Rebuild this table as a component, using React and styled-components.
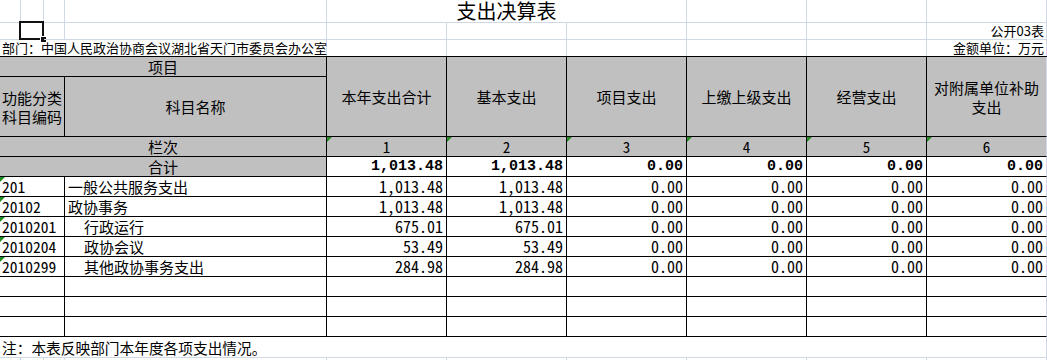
import React from 'react';
import styled, { createGlobalStyle, css } from 'styled-components';

const GRID = '#d0d7e5';
const INK = '#000';
const HEAD = '#c0c0c0';
const CJK = '"Noto Sans CJK SC", "Noto Sans CJK JP", sans-serif';
const NUM = '"Noto Sans Mono CJK SC", "Liberation Mono", monospace';

const GlobalStyle = createGlobalStyle`
  html, body { margin: 0; padding: 0; background: #fff; }
  body { font-family: ${CJK}; color: #000; overflow: hidden; }
`;

const Sheet = styled.div`
  width: 1047px;
  height: 360px;
  overflow: hidden;
`;

// light spreadsheet grid above and below the table
const LooseGrid = styled.div`
  display: grid;
  grid-template-columns: 21px 23px 21px 262px repeat(6, 120px);
  grid-template-rows: ${p => p.$rows};
`;

const GridCell = styled.div`
  box-sizing: border-box;
  position: relative;
  display: flex;
  align-items: center;
  justify-content: ${p => (p.$right ? 'flex-end' : p.$center ? 'center' : 'flex-start')};
  padding: 0 2px;
  border-right: 1px solid ${GRID};
  border-bottom: ${p => (p.$noBottom ? 'none' : `1px solid ${GRID}`)};
  grid-column: ${p => p.$col || 'auto'};
  font-size: 13px;
  line-height: 16px;
  white-space: nowrap;
`;

const Title = styled(GridCell)`
  font-size: 20px;
  line-height: 22px;
`;

const Selection = styled.div`
  position: absolute;
  top: -2px;
  left: -2px;
  width: 25px;
  height: 19px;
  box-sizing: border-box;
  border: 2px solid #111;
  &::after {
    content: '';
    position: absolute;
    right: -4px;
    bottom: -4px;
    width: 5px;
    height: 5px;
    background: #111;
    border-top: 1px solid #fff;
    border-left: 1px solid #fff;
  }
`;

const Table = styled.div`
  display: grid;
  grid-template-columns: 65px 262px repeat(6, 120px);
  grid-template-rows: 20px 60px repeat(10, 20px);
  border-top: 1px solid ${INK};
`;

const marked = css`
  &::before {
    content: '';
    position: absolute;
    top: 0;
    left: 0;
    border-top: 5px solid #1f8f1f;
    border-right: 5px solid transparent;
  }
`;

const cellBase = css`
  box-sizing: border-box;
  position: relative;
  display: flex;
  align-items: center;
  min-width: 0;
  white-space: nowrap;
  line-height: 19px;
  border-right: 1px solid ${p => (p.$last ? GRID : INK)};
  border-bottom: 1px solid ${INK};
  ${p => p.$mark && marked};
`;

const HeadCell = styled.div`
  ${cellBase};
  justify-content: center;
  text-align: center;
  background: ${HEAD};
  font-size: 15px;
  grid-column: ${p => p.$span || 'auto'};
  grid-row: ${p => p.$rows || 'auto'};
`;

const IndexCell = styled(HeadCell)`
  font-family: ${NUM};
  font-size: 15px;
`;

const CodeCell = styled.div`
  ${cellBase};
  padding-left: 2px;
  font-family: ${NUM};
  font-size: 15.5px;
`;

const NameCell = styled.div`
  ${cellBase};
  padding-left: ${p => 3 + p.$level * 16}px;
  font-size: 15px;
`;

const NumCell = styled.div`
  ${cellBase};
  justify-content: flex-end;
  padding-right: 3px;
  font-family: ${p => (p.$bold ? '"Liberation Mono", monospace' : NUM)};
  font-size: ${p => (p.$bold ? '15px' : '16px')};
  font-weight: ${p => (p.$bold ? 700 : 400)};
`;

const Footer = styled.div`
  box-sizing: border-box;
  height: 21px;
  display: flex;
  align-items: center;
  padding-left: 2px;
  border-right: 1px solid ${GRID};
  border-bottom: 1px solid ${GRID};
  font-size: 14.7px;
  line-height: 19px;
  white-space: nowrap;
`;

const heads = ['本年支出合计', '基本支出', '项目支出', '上缴上级支出', '经营支出', ['对附属单位补助', '支出']];

const zero = '0.00';
const totals = ['1,013.48', '1,013.48', zero, zero, zero, zero];

const rows = [
  { code: '201', name: '一般公共服务支出', level: 0, v: ['1,013.48', '1,013.48', zero, zero, zero, zero] },
  { code: '20102', name: '政协事务', level: 0, v: ['1,013.48', '1,013.48', zero, zero, zero, zero] },
  { code: '2010201', name: '行政运行', level: 1, v: ['675.01', '675.01', zero, zero, zero, zero] },
  { code: '2010204', name: '政协会议', level: 1, v: ['53.49', '53.49', zero, zero, zero, zero] },
  { code: '2010299', name: '其他政协事务支出', level: 1, v: ['284.98', '284.98', zero, zero, zero, zero] },
];

const cols = [1, 2, 3, 4, 5, 6, 7, 8, 9, 10];

export default function App() {
  return (
    <Sheet>
      <GlobalStyle />
      <LooseGrid $rows='23px 17px 16px'>
        <GridCell $col={1} />
        <GridCell $col={2} />
        <GridCell $col={3} />
        <GridCell $col={4} />
        <Title $col='5 / 8' $center>支出决算表</Title>
        <GridCell $col={8} />
        <GridCell $col={9} />
        <GridCell $col={10} />

        {cols.map(c => (
          <GridCell key={c} $col={c} $right={c === 10}>
            {c === 2 && <Selection />}
            {c === 10 && '公开03表'}
          </GridCell>
        ))}

        <GridCell $col='1 / 5' $noBottom>部门：中国人民政治协商会议湖北省天门市委员会办公室</GridCell>
        {[5, 6, 7, 8, 9].map(c => (
          <GridCell key={c} $col={c} $noBottom />
        ))}
        <GridCell $col={10} $noBottom $right>金额单位：万元</GridCell>
      </LooseGrid>

      <Table>
        <HeadCell $span='1 / 3'>项目</HeadCell>
        {heads.map((h, i) => (
          <HeadCell key={i} $span={i + 3} $rows='1 / 3' $last={i === 5}>
            {Array.isArray(h) ? (
              <span>
                {h[0]}
                <br />
                {h[1]}
              </span>
            ) : (
              h
            )}
          </HeadCell>
        ))}
        <HeadCell $span={1} $rows={2}>
          <span>
            功能分类
            <br />
            科目编码
          </span>
        </HeadCell>
        <HeadCell $span={2} $rows={2}>科目名称</HeadCell>

        <HeadCell $span='1 / 3'>栏次</HeadCell>
        {[1, 2, 3, 4, 5, 6].map(n => (
          <IndexCell key={n} $mark $last={n === 6}>{n}</IndexCell>
        ))}

        <HeadCell $span='1 / 3'>合计</HeadCell>
        {totals.map((v, i) => (
          <NumCell key={i} $bold $last={i === 5}>{v}</NumCell>
        ))}

        {rows.map(r => (
          <React.Fragment key={r.code}>
            <CodeCell $mark>{r.code}</CodeCell>
            <NameCell $level={r.level}>{r.name}</NameCell>
            {r.v.map((v, i) => (
              <NumCell key={i} $last={i === 5}>{v}</NumCell>
            ))}
          </React.Fragment>
        ))}

        {[0, 1, 2].map(k => (
          <React.Fragment key={k}>
            <CodeCell />
            <NameCell $level={0} />
            {[0, 1, 2, 3, 4, 5].map(i => (
              <NumCell key={i} $last={i === 5} />
            ))}
          </React.Fragment>
        ))}
      </Table>

      <Footer>注：本表反映部门本年度各项支出情况。</Footer>

      <LooseGrid $rows='20px'>
        {cols.map(c => (
          <GridCell key={c} $col={c} />
        ))}
      </LooseGrid>
    </Sheet>
  );
}
